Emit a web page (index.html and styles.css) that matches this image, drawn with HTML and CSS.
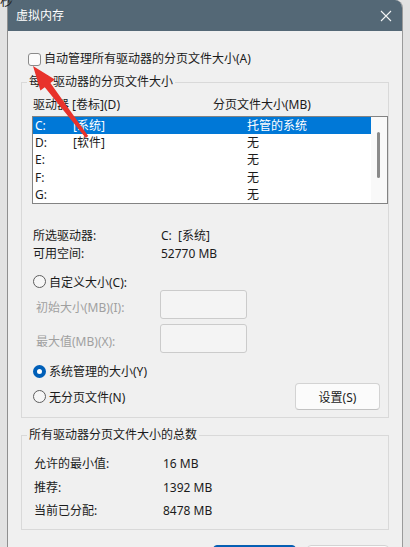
FILE: index.html
```html
<!DOCTYPE html>
<html lang="zh-CN">
<head>
<meta charset="utf-8">
<link rel="stylesheet" href="styles.css">
</head>
<body>
<div class="page">
  <div class="bg-char">杪</div>
  <div class="dialog">
    <div class="titlebar">
      <span class="title">虚拟内存</span>
      <svg class="close" width="12" height="12" viewBox="0 0 12 12"><path d="M1 1 L11 11 M11 1 L1 11" stroke="#f2f4f5" stroke-width="1.1" fill="none"/></svg>
    </div>
    <div class="content">
      <div class="check-row"><span class="checkbox"></span><span>自动管理所有驱动器的分页文件大小(A)</span></div>

      <fieldset class="group g1">
        <legend>每个驱动器的分页文件大小</legend>
        <div class="list-head"><span class="h-drive">驱动器 [卷标](D)</span><span>分页文件大小(MB)</span></div>
        <div class="listbox">
          <div class="rows">
            <div class="row sel"><span class="c1">C:</span><span class="c2">[系统]</span><span>托管的系统</span></div>
            <div class="row"><span class="c1">D:</span><span class="c2">[软件]</span><span>无</span></div>
            <div class="row"><span class="c1">E:</span><span class="c2"></span><span>无</span></div>
            <div class="row"><span class="c1">F:</span><span class="c2"></span><span>无</span></div>
            <div class="row"><span class="c1">G:</span><span class="c2"></span><span>无</span></div>
          </div>
          <div class="scroll"><div class="thumb"></div></div>
        </div>

        <div class="info first"><span class="info-label">所选驱动器:</span><span>C:&nbsp; [系统]</span></div>
        <div class="info"><span class="info-label">可用空间:</span><span>52770 MB</span></div>

        <div class="radio-row r1"><span class="radio"></span><span>自定义大小(C):</span></div>
        <div class="input-row"><span class="input-label">初始大小(MB)(I):</span><span class="textbox"></span></div>
        <div class="input-row second"><span class="input-label">最大值(MB)(X):</span><span class="textbox"></span></div>
        <div class="radio-row r2"><span class="radio on"></span><span>系统管理的大小(Y)</span></div>
        <div class="radio-row r3">
          <span class="radio"></span><span class="grow">无分页文件(N)</span>
          <span class="btn">设置(S)</span>
        </div>
      </fieldset>

      <fieldset class="group g2">
        <legend>所有驱动器分页文件大小的总数</legend>
        <div class="total first"><span class="total-label">允许的最小值:</span><span>16 MB</span></div>
        <div class="total"><span class="total-label">推荐:</span><span>1392 MB</span></div>
        <div class="total"><span class="total-label">当前已分配:</span><span>8478 MB</span></div>
      </fieldset>

      <div class="footer">
        <span class="fbtn primary"></span>
        <span class="fbtn"></span>
      </div>
    </div>
  </div>
  <svg class="arrow" width="410" height="547" viewBox="0 0 410 547">
    <polygon points="33,66 54.8,79.6 50.4,83 88.2,136.1 85.8,137.9 44.8,87.2 40.4,90.6" fill="#e8322b"/>
  </svg>
</div>
</body>
</html>
```

FILE: styles.css
```css
html, body {
  margin: 0;
  padding: 0;
}
body {
  width: 410px;
  height: 547px;
  overflow: hidden;
  background: #e2e2e2;
  font-family: "Noto Sans", "Noto Sans CJK SC", sans-serif;
  font-size: 12px;
  color: #1b1b1b;
}
.page {
  position: relative;
  width: 410px;
  height: 547px;
  overflow: hidden;
}
.bg-char {
  position: absolute;
  left: 0;
  top: -7px;
  font-size: 13px;
  line-height: 14px;
  color: #222;
}
.dialog {
  margin-left: 7px;
  width: 396px;
  height: 560px;
  box-sizing: border-box;
  border-left: 1px solid #8f8f8f;
  border-right: 1px solid #9a9a9a;
  border-top-right-radius: 8px;
  background: #f0f0f0;
  overflow: hidden;
}
.titlebar {
  height: 31px;
  background: #546876;
  display: flex;
  align-items: center;
  justify-content: space-between;
  padding: 0 10px 0 8px;
}
.title {
  color: #ffffff;
  font-size: 12px;
  line-height: 16px;
}
.close {
  display: block;
}
.content {
  padding: 18px 13px 0 13px;
}
.check-row {
  display: flex;
  align-items: center;
  height: 20px;
  line-height: 20px;
  padding-left: 7px;
}
.checkbox {
  width: 11px;
  height: 11px;
  border: 1px solid #8a8a8a;
  border-radius: 3px;
  background: #fbfbfb;
  margin-right: 3px;
}
.group {
  margin: 0;
  padding: 0;
  border: 1px solid #d9d9d9;
  width: 368px;
  box-sizing: border-box;
  min-inline-size: 0;
}
.group legend {
  margin-left: 5px;
  padding: 0 2px;
  line-height: 16px;
  height: 16px;
}
.g1 {
  margin-top: 5px;
  padding-bottom: 7px;
}
.list-head {
  display: flex;
  margin-top: 6px;
  height: 17px;
  line-height: 17px;
  padding-left: 11px;
}
.h-drive {
  width: 180px;
}
.listbox {
  margin: 3px 0 0 10px;
  width: 356px;
  height: 88px;
  box-sizing: border-box;
  border: 1px solid #838383;
  background: #ffffff;
  display: flex;
}
.rows {
  width: 338px;
}
.row {
  display: flex;
  height: 17.2px;
  line-height: 17.2px;
}
.row.sel {
  background: #0078d7;
  color: #ffffff;
}
.c1 {
  width: 38px;
  padding-left: 2px;
}
.c2 {
  width: 174px;
}
.scroll {
  width: 16px;
  background: #f9f9f9;
}
.thumb {
  margin: 15px 0 0 6px;
  width: 3px;
  height: 46px;
  border-radius: 2px;
  background: #8a8a8a;
}
.info {
  display: flex;
  height: 18px;
  line-height: 18px;
  padding-left: 11px;
}
.info.first {
  margin-top: 23px;
}
.info-label {
  width: 128px;
}
.radio-row {
  display: flex;
  align-items: center;
  padding-left: 11px;
}
.radio {
  width: 13px;
  height: 13px;
  box-sizing: border-box;
  border-radius: 50%;
  border: 1px solid #5e5e5e;
  background: #f6f6f6;
  margin-right: 3px;
  flex: none;
}
.radio.on {
  border: 4px solid #005fb8;
  background: #ffffff;
}
.r1 {
  margin-top: 10px;
  height: 17px;
}
.r2 {
  margin-top: 9px;
  height: 18px;
}
.r3 {
  margin-top: 3px;
  height: 27px;
  padding-right: 8px;
}
.grow {
  flex: 1;
}
.btn {
  width: 85px;
  height: 27px;
  box-sizing: border-box;
  border: 1px solid #d3d3d3;
  border-bottom-color: #c2c2c2;
  border-radius: 4px;
  background: #fbfbfb;
  display: flex;
  align-items: center;
  justify-content: center;
}
.input-row {
  display: flex;
  align-items: center;
  height: 29px;
  padding-left: 14px;
  color: #a0a0a0;
}
.input-row.second {
  margin-top: 5px;
}
.input-label {
  width: 124px;
  padding-top: 4px;
}
.textbox {
  width: 87px;
  height: 29px;
  box-sizing: border-box;
  border: 1px solid #cbcbcb;
  border-radius: 3px;
  background: #f4f4f4;
}
.g2 {
  margin-top: 9px;
  padding-bottom: 6px;
}
.total {
  display: flex;
  height: 23.5px;
  line-height: 23.5px;
  padding-left: 12px;
}
.total.first {
  margin-top: 9px;
}
.total-label {
  width: 129px;
}
.footer {
  display: flex;
  margin-top: 15px;
  padding-left: 192px;
  gap: 11px;
}
.fbtn {
  width: 84px;
  height: 27px;
  box-sizing: border-box;
  border: 1px solid #d3d3d3;
  border-radius: 4px;
  background: #fbfbfb;
}
.fbtn.primary {
  background: #005fb8;
  border-color: #0a5fb0;
}
.arrow {
  position: absolute;
  left: 0;
  top: 0;
  pointer-events: none;
}
```
